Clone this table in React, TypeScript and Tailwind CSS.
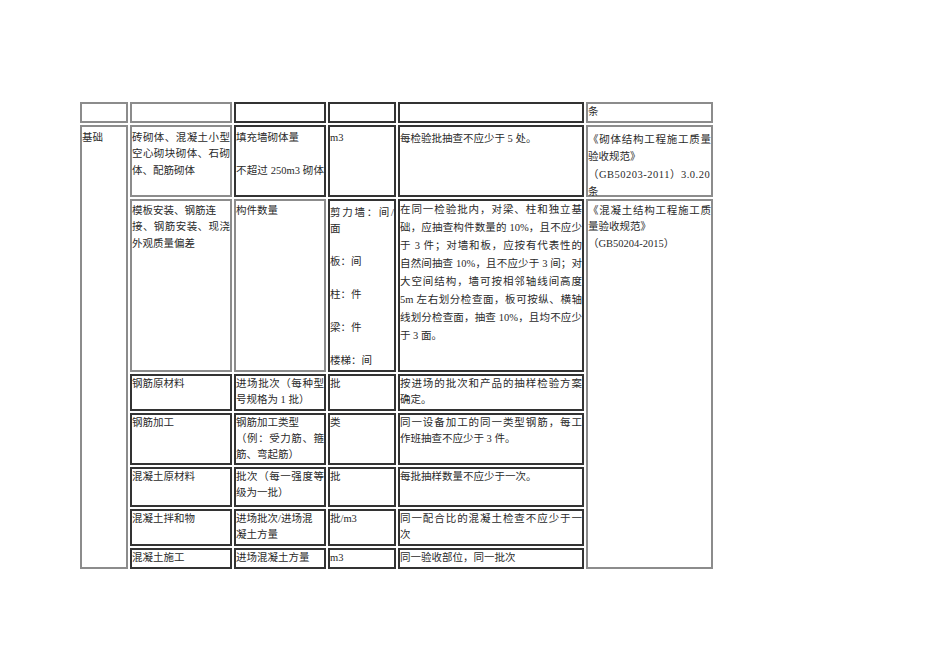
import type { ReactNode } from "react"
import clsx from "clsx"

// every text line is a fixed-height block so mixed fonts don't grow the rows
const J = ({ children, className }: { children: ReactNode; className?: string }) => (
  <div
    className={clsx(
      "h-[16.5px] whitespace-nowrap text-justify [text-align-last:justify]",
      className,
    )}
  >
    {children}
  </div>
)
const L = ({ children, className }: { children?: ReactNode; className?: string }) => (
  <div className={clsx("h-[16.5px] whitespace-nowrap", className)}>
    {children ?? "\u00a0"}
  </div>
)

type CellProps = {
  children?: ReactNode
  rowSpan?: number
  dark?: boolean
  className?: string
}

const Cell = ({ children, rowSpan, dark = true, className }: CellProps) => (
  <td
    rowSpan={rowSpan}
    className={clsx(
      "align-top border-2 p-0 leading-[16.5px]",
      dark ? "border-[#333]" : "border-[#8c8c8c]",
      className,
    )}
  >
    {children}
  </td>
)

export default function App() {
  return (
    <div className="min-h-[672px] w-[950px] bg-white pl-[78px] pt-[100px] font-['Liberation_Serif','Noto_Sans_CJK_SC',serif] text-[10.5px] text-[#2a2a2a]">
      <table className="table-fixed w-[637px] border-separate border-spacing-0.5">
        <colgroup>
          <col className="w-[48px]" />
          <col className="w-[102px]" />
          <col className="w-[92px]" />
          <col className="w-[68px]" />
          <col className="w-[186px]" />
          <col className="w-[127px]" />
        </colgroup>
        <tbody>
          {/* 上页续行 */}
          <tr className="h-[18px]">
            <Cell dark={false} />
            <Cell dark={false} />
            <Cell />
            <Cell />
            <Cell />
            <Cell dark={false} className="leading-[14px]">
              <L className="h-[14px]">条</L>
            </Cell>
          </tr>

          {/* 砌体 */}
          <tr className="h-[72px]">
            <Cell rowSpan={7} dark={false} className="pt-[3px]">
              <L>基础</L>
            </Cell>
            <Cell dark={false} className="pt-[3px]">
              <J>砖砌体、混凝土小型</J>
              <J>空心砌块砌体、石砌</J>
              <L>体、配筋砌体</L>
            </Cell>
            <Cell className="pt-[3px]">
              <L>填充墙砌体量</L>
              <L />
              <J>不超过 250m3 砌体</J>
            </Cell>
            <Cell className="pt-[3px]">
              <L>m3</L>
            </Cell>
            <Cell className="pt-[4px]">
              <L>每检验批抽查不应少于 5 处。</L>
            </Cell>
            <Cell dark={false}>
              {/* 文字比单元格略高，不撑开行高 */}
              <div className="h-[60px] pt-[4px] leading-[17.5px]">
                <J className="h-[17.5px]">《砌体结构工程施工质量</J>
                <L className="h-[17.5px]">验收规范》</L>
                <L className="h-[17.5px] tracking-[0.5px]">（GB50203-2011）3.0.20</L>
                <L className="h-[17.5px]">条</L>
              </div>
            </Cell>
          </tr>

          {/* 混凝土结构 */}
          <tr className="h-[173px]">
            <Cell dark={false} className="pt-[2px]">
              <L>模板安装、钢筋连</L>
              <J>接、钢筋安装、现浇</J>
              <L>外观质量偏差</L>
            </Cell>
            <Cell dark={false} className="pt-[2px]">
              <L>构件数量</L>
            </Cell>
            <Cell className="pt-[4px]">
              <J>剪力墙：间/</J>
              <L>面</L>
              <L />
              <L>板：间</L>
              <L />
              <L>柱：件</L>
              <L />
              <L>梁：件</L>
              <L />
              <L>楼梯：间</L>
            </Cell>
            <Cell className="leading-[18px]">
              <J className="h-[18px]">在同一检验批内，对梁、柱和独立基</J>
              <J className="h-[18px]">础，应抽查构件数量的 10%，且不应少</J>
              <J className="h-[18px]">于 3 件；对墙和板，应按有代表性的</J>
              <J className="h-[18px]">自然间抽查 10%，且不应少于 3 间；对</J>
              <J className="h-[18px]">大空间结构，墙可按相邻轴线间高度</J>
              <J className="h-[18px]">5m 左右划分检查面，板可按纵、横轴</J>
              <J className="h-[18px]">线划分检查面，抽查 10%，且均不应少</J>
              <L className="h-[18px]">于 3 面。</L>
            </Cell>
            <Cell rowSpan={6} dark={false} className="pt-[2px]">
              <J>《混凝土结构工程施工质</J>
              <L>量验收规范》</L>
              <L>（GB50204-2015）</L>
            </Cell>
          </tr>

          <tr className="h-[36px]">
            <Cell>
              <L>钢筋原材料</L>
            </Cell>
            <Cell>
              <J>进场批次（每种型</J>
              <L>号规格为 1 批）</L>
            </Cell>
            <Cell>
              <L>批</L>
            </Cell>
            <Cell>
              <J>按进场的批次和产品的抽样检验方案</J>
              <L>确定。</L>
            </Cell>
          </tr>

          <tr className="h-[52px]">
            <Cell>
              <L>钢筋加工</L>
            </Cell>
            <Cell>
              <L className="h-[16px]">钢筋加工类型</L>
              <J className="h-[16px]">（例：受力筋、箍</J>
              <L className="h-[16px]">筋、弯起筋）</L>
            </Cell>
            <Cell>
              <L>类</L>
            </Cell>
            <Cell>
              <J>同一设备加工的同一类型钢筋，每工</J>
              <L>作班抽查不应少于 3 件。</L>
            </Cell>
          </tr>

          <tr className="h-[40px]">
            <Cell>
              <L>混凝土原材料</L>
            </Cell>
            <Cell>
              <J>批次（每一强度等</J>
              <L>级为一批）</L>
            </Cell>
            <Cell>
              <L>批</L>
            </Cell>
            <Cell>
              <L>每批抽样数量不应少于一次。</L>
            </Cell>
          </tr>

          <tr className="h-[37px]">
            <Cell>
              <L>混凝土拌和物</L>
            </Cell>
            <Cell>
              <L>进场批次/进场混</L>
              <L>凝土方量</L>
            </Cell>
            <Cell>
              <L>批/m3</L>
            </Cell>
            <Cell>
              <J>同一配合比的混凝土检查不应少于一</J>
              <L>次</L>
            </Cell>
          </tr>

          <tr className="h-[21px]">
            <Cell>
              <L>混凝土施工</L>
            </Cell>
            <Cell>
              <L>进场混凝土方量</L>
            </Cell>
            <Cell>
              <L>m3</L>
            </Cell>
            <Cell>
              <L>同一验收部位，同一批次</L>
            </Cell>
          </tr>
        </tbody>
      </table>
    </div>
  )
}
